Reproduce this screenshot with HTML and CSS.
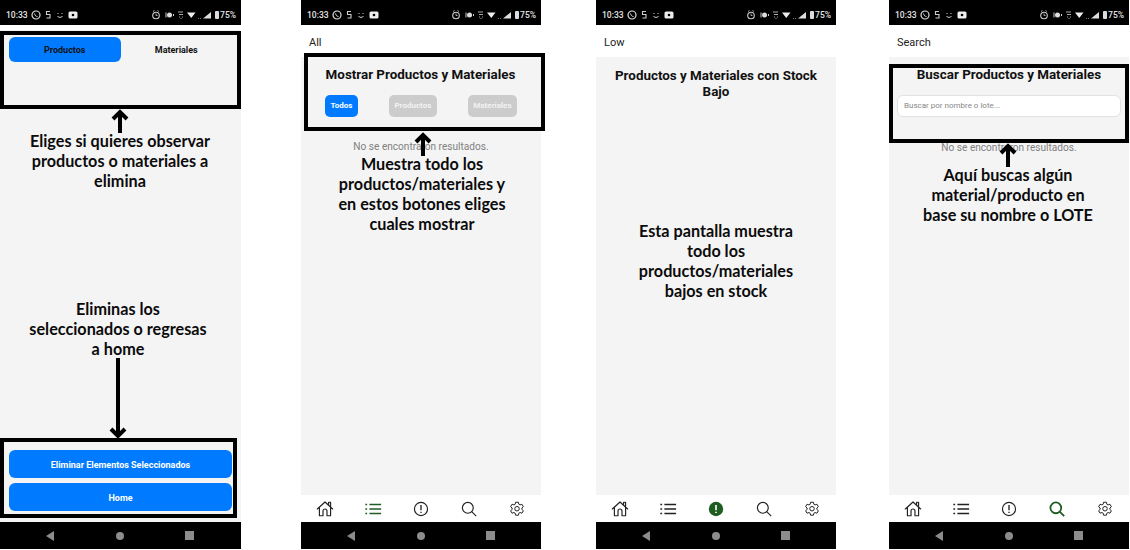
FILE: index.html
```html
<!DOCTYPE html>
<html lang="es">
<head>
<meta charset="UTF-8">
<title>Pantallas de inventario</title>
<link rel="stylesheet" href="styles.css">
</head>
<body>
<!--shared icons-->
<svg class="defs" width="0" height="0">
	<symbol id="i-home" viewBox="0 0 20 20"><path d="M1.5 10 10 2.2l8.5 7.800M3.800 8v9.500h4v-5.300a2.200 2.200 0 0 1 4.400 0v5.300h4V8M14 5V2.500h2.200v4.500" fill="none" stroke="currentColor" stroke-width="1.300" stroke-linejoin="round" stroke-linecap="round"/></symbol>
	<symbol id="i-list" viewBox="0 0 20 20"><path d="M6 5h13M6 10h13M6 15h13M1.5 5h2M1.5 10h2M1.5 15h2" fill="none" stroke="currentColor" stroke-width="1.5"/></symbol>
	<symbol id="i-alert" viewBox="0 0 20 20"><circle cx="10" cy="10" r="7.300" fill="none" stroke="currentColor" stroke-width="1.300"/><path d="M10 5.500v5.800M10 13v1.500" fill="none" stroke="currentColor" stroke-width="1.5"/></symbol>
	<symbol id="i-alert-on" viewBox="0 0 20 20"><circle cx="10" cy="10" r="8" fill="currentColor"/><path d="M10 5.500v5.800M10 13v1.500" fill="none" stroke="#fff" stroke-width="1.800"/></symbol>
	<symbol id="i-search" viewBox="0 0 20 20"><circle cx="8.700" cy="8.700" r="6" fill="none" stroke="currentColor" stroke-width="1.300"/><path d="m13 13 5 5" fill="none" stroke="currentColor" stroke-width="1.300"/></symbol>
	<symbol id="i-search-on" viewBox="0 0 20 20"><circle cx="8.700" cy="8.700" r="6" fill="none" stroke="currentColor" stroke-width="2"/><path d="m13 13 5 5" fill="none" stroke="currentColor" stroke-width="2"/></symbol>
	<symbol id="i-gear" viewBox="0 0 20 20"><path d="M8.400 2.500h3.200l.4 2.200 1.400.8 2.100-.8 1.600 2.800-1.700 1.400v1.600l1.700 1.400-1.600 2.800-2.100-.8-1.400.8-.4 2.200H8.400L8 14.700l-1.400-.8-2.100.8-1.600-2.800 1.700-1.400V8.900L2.900 7.500l1.600-2.800 2.100.8L8 4.700z" fill="none" stroke="currentColor" stroke-width="1.100" stroke-linejoin="round"/><circle cx="10" cy="9.700" r="2.500" fill="none" stroke="currentColor" stroke-width="1.100"/></symbol>
	<symbol id="i-status-left" viewBox="0 0 60 12"><circle cx="5" cy="6" r="4" fill="none" stroke="#ddd" stroke-width="1.200"/><path d="M3.500 4.500c.5 2 1.500 3 3 3" fill="none" stroke="#ddd"/><path d="M19 2.500h-3.500v3H19v3.500h-3.500" fill="none" stroke="#ccc" stroke-width="1.100"/><path d="M27 4v1M31 4v1M26.500 7.500q2.500 2 5 0" fill="none" stroke="#ccc"/><rect x="37.500" y="2.500" width="9" height="7" rx="1.500" fill="#eee"/><circle cx="42" cy="6" r="1.300" fill="#000"/></symbol>
	<symbol id="i-status-right" viewBox="0 0 60 12"><circle cx="4" cy="6.500" r="3.300" fill="none" stroke="#ccc" stroke-width="1.100"/><path d="M1 2.500 2.500 1.500M7 2.500 5.500 1.500M4 4.500v2h1.500" fill="none" stroke="#ccc" stroke-width=".8"/><circle cx="17.500" cy="6" r="2.500" fill="#ddd"/><path d="M14 3.500v5M21.500 5v2" stroke="#ccc" fill="none"/><path d="M26 3h5M27 5.500h4M27 8h1M30 8h1M28.500 9.500h1" stroke="#aaa" fill="none"/><path d="m35 3.500h8.500L39.250 9z" fill="#eee"/><path d="M46 9.500h1M48 9.500h1" stroke="#777" fill="none"/><path d="M51 9.500 59 3v6.500z" fill="#ddd"/></symbol>
</svg>

<div class="gallery">

	<div class="phone">
		<div class="status-bar">
			<span class="status-group"><span>10:33</span><svg class="status-icons"><use href="#i-status-left"/></svg></span>
			<span class="status-group"><svg class="status-icons"><use href="#i-status-right"/></svg><span class="battery"></span><span>75%</span></span>
		</div>
		<div class="screen screen-delete">
			<div class="delete-tabs">
				<div class="delete-tab delete-tab-on">Productos</div>
				<div class="delete-tab">Materiales</div>
			</div>
			<div class="delete-actions">
				<div class="wide-btn">Eliminar Elementos Seleccionados</div>
				<div class="wide-btn">Home</div>
			</div>
		</div>
		<div class="nav-bar"><i class="nav-back"></i><i class="nav-home"></i><i class="nav-recent"></i></div>
		<svg class="arrow arrow-d1" width="18" height="24" viewBox="0 0 18 24"><path d="M9 24V3M2 10l7-7 7 7"/></svg>
		<p class="note note-d1">Eliges si quieres observar<br>productos o materiales a<br>elimina</p>
		<p class="note note-d2">Eliminas los<br>seleccionados o regresas<br>a home</p>
		<svg class="arrow arrow-d2" width="18" height="81" viewBox="0 0 18 81"><path d="M9 0v78M2 71l7 7 7-7"/></svg>
	</div>

	<div class="phone phone-all">
		<div class="status-bar">
			<span class="status-group"><span>10:33</span><svg class="status-icons"><use href="#i-status-left"/></svg></span>
			<span class="status-group"><svg class="status-icons"><use href="#i-status-right"/></svg><span class="battery"></span><span>75%</span></span>
		</div>
		<div class="page-head">All</div>
		<div class="screen">
			<div class="framed">
				<h2 class="title title-all">Mostrar Productos y Materiales</h2>
				<div class="filters">
					<div class="filter filter-on">Todos</div>
					<div class="filter">Productos</div>
					<div class="filter">Materiales</div>
				</div>
			</div>
			<p class="empty">No se encontraron resultados.</p>
		</div>
		<div class="tab-bar">
			<svg class="tab"><use href="#i-home"/></svg>
			<svg class="tab tab-on"><use href="#i-list"/></svg>
			<svg class="tab"><use href="#i-alert"/></svg>
			<svg class="tab"><use href="#i-search"/></svg>
			<svg class="tab"><use href="#i-gear"/></svg>
		</div>
		<div class="nav-bar"><i class="nav-back"></i><i class="nav-home"></i><i class="nav-recent"></i></div>
		<svg class="arrow arrow-a" width="18" height="24" viewBox="0 0 18 24"><path d="M9 24V3M2 10l7-7 7 7"/></svg>
		<p class="note note-a">Muestra todo los<br>productos/materiales y<br>en estos botones eliges<br>cuales mostrar</p>
	</div>

	<div class="phone phone-low">
		<div class="status-bar">
			<span class="status-group"><span>10:33</span><svg class="status-icons"><use href="#i-status-left"/></svg></span>
			<span class="status-group"><svg class="status-icons"><use href="#i-status-right"/></svg><span class="battery"></span><span>75%</span></span>
		</div>
		<div class="page-head">Low</div>
		<div class="screen">
			<h2 class="title title-low">Productos y Materiales con Stock Bajo</h2>
		</div>
		<div class="tab-bar">
			<svg class="tab"><use href="#i-home"/></svg>
			<svg class="tab"><use href="#i-list"/></svg>
			<svg class="tab tab-on"><use href="#i-alert-on"/></svg>
			<svg class="tab"><use href="#i-search"/></svg>
			<svg class="tab"><use href="#i-gear"/></svg>
		</div>
		<div class="nav-bar"><i class="nav-back"></i><i class="nav-home"></i><i class="nav-recent"></i></div>
		<p class="note note-l">Esta pantalla muestra<br>todo los<br>productos/materiales<br>bajos en stock</p>
	</div>

	<div class="phone phone-search">
		<div class="status-bar">
			<span class="status-group"><span>10:33</span><svg class="status-icons"><use href="#i-status-left"/></svg></span>
			<span class="status-group"><svg class="status-icons"><use href="#i-status-right"/></svg><span class="battery"></span><span>75%</span></span>
		</div>
		<div class="page-head">Search</div>
		<div class="screen">
			<div class="framed framed-search">
				<h2 class="title title-search">Buscar Productos y Materiales</h2>
				<div class="search-box">Buscar por nombre o lote...</div>
			</div>
			<p class="empty empty-search">No se encontraron resultados.</p>
		</div>
		<div class="tab-bar">
			<svg class="tab"><use href="#i-home"/></svg>
			<svg class="tab"><use href="#i-list"/></svg>
			<svg class="tab"><use href="#i-alert"/></svg>
			<svg class="tab tab-on"><use href="#i-search-on"/></svg>
			<svg class="tab"><use href="#i-gear"/></svg>
		</div>
		<div class="nav-bar"><i class="nav-back"></i><i class="nav-home"></i><i class="nav-recent"></i></div>
		<svg class="arrow arrow-s" width="18" height="24" viewBox="0 0 18 24"><path d="M9 24V3M2 10l7-7 7 7"/></svg>
		<p class="note note-s">Aquí buscas algún<br>material/producto en<br>base su nombre o LOTE</p>
	</div>

</div>
</body>
</html>
```

FILE: styles.css
```css
html, body {
	margin: 0;
	padding: 0;
	background-color: #FFFFFF;
}
body {
	font-family: "Roboto", "Liberation Sans", sans-serif;
	color: #111111;
	overflow: hidden;
}
.defs {
	position: absolute;
}
.gallery {
	display: flex;
	align-items: flex-start;
}
.phone {
	position: relative;
	display: flex;
	flex-direction: column;
	width: 241px;
	height: 549px;
	flex: none;
}
.phone-all {
	margin-left: 60px;
	width: 240px;
}
.phone-low {
	margin-left: 55px;
	width: 240px;
}
.phone-search {
	margin-left: 53px;
	width: 240px;
}
.status-bar {
	display: flex;
	justify-content: space-between;
	align-items: center;
	height: 25px;
	padding: 5px 5px 0 6px;
	box-sizing: border-box;
	background: #000000;
	color: #E4E4E4;
	font-size: 8.5px;
	font-weight: 500;
}
.status-group {
	display: flex;
	align-items: center;
	gap: 3px;
}
.status-icons {
	width: 60px;
	height: 12px;
}
.battery {
	width: 4px;
	height: 8px;
	margin-right: -2px;
	background: #DDDDDD;
	border-radius: 1px;
}
.page-head {
	height: 32px;
	padding: 10px 0 0 8px;
	box-sizing: border-box;
	font-size: 11px;
	line-height: 16px;
	color: #222222;
}
.screen {
	flex: 1;
	display: flex;
	flex-direction: column;
	min-height: 0;
	background: #F4F4F4;
}
.screen-delete {
	border-top: 5px solid #FFFFFF;
}
.nav-bar {
	position: relative;
	height: 27px;
	background: #000000;
}
.nav-bar i {
	position: absolute;
	top: 9px;
}
.nav-back {
	left: 46px;
	width: 0;
	height: 0;
	border-top: 5px solid transparent;
	border-bottom: 5px solid transparent;
	border-right: 8px solid #8C8C8C;
}
.nav-home {
	left: 116px;
	width: 8px;
	height: 8px;
	margin-top: 1px;
	border-radius: 50%;
	background: #8C8C8C;
}
.nav-recent {
	left: 185px;
	width: 9px;
	height: 9px;
	background: #8C8C8C;
}
.tab-bar {
	display: flex;
	justify-content: space-around;
	align-items: center;
	height: 27px;
	background: #FFFFFF;
	color: #222222;
}
.tab {
	width: 18px;
	height: 18px;
}
.tab-on {
	color: #1F5C22;
}
/* delete screen */
.delete-tabs {
	display: flex;
	height: 78px;
	padding: 2px 5px 0;
	box-sizing: border-box;
	border: 4px solid #000000;
	margin-top: 1px;
}
.delete-tab {
	flex: 1;
	height: 25px;
	line-height: 27px;
	text-align: center;
	font-size: 9px;
	font-weight: 700;
	border-radius: 6px;
}
.delete-tab-on {
	background: #007BFF;
}
.delete-actions {
	display: flex;
	flex-direction: column;
	gap: 5px;
	margin-top: auto;
	margin-bottom: 4px;
	width: 237px;
	height: 80px;
	padding: 8px 1px 0 5px;
	box-sizing: border-box;
	border: 4px solid #000000;
}
.wide-btn {
	height: 28px;
	line-height: 30px;
	text-align: center;
	border-radius: 6px;
	background: #007BFF;
	color: #FFFFFF;
	font-size: 9px;
	font-weight: 700;
}
/* list and search screens */
.framed {
	width: 241px;
	height: 78px;
	margin: -4px 0 0 3px;
	padding-top: 10px;
	box-sizing: border-box;
	border: 4px solid #000000;
	position: relative;
}
.title {
	margin: 0;
	text-align: center;
	font-size: 13.4px;
	line-height: 16px;
	font-weight: 700;
	color: #111111;
}
.title-all {
	padding-right: 8px;
}
.title-low {
	padding: 11px 10px 0;
}
.title-search {
	margin-top: -11px;
}
.filters {
	display: flex;
	justify-content: space-between;
	padding: 0 24px 0 17px;
	margin-top: 12px;
}
.filter {
	height: 22px;
	line-height: 22px;
	padding: 0 5.5px;
	border-radius: 5px;
	background: #CCCCCC;
	color: #F2F2F2;
	font-size: 8px;
	font-weight: 700;
}
.filter-on {
	background: #007BFF;
	color: #FFFFFF;
}
.empty {
	margin: 9px 0 0;
	text-align: center;
	font-size: 10.1px;
	line-height: 14px;
	color: #808080;
}
.framed-search {
	width: 240px;
	height: 79px;
	margin: 7px 0 0;
}
.search-box {
	height: 22px;
	line-height: 20px;
	margin: 12px 4px 0;
	padding-left: 6px;
	box-sizing: border-box;
	background: #FFFFFF;
	border: 1px solid #E2E2E2;
	border-radius: 6px;
	font-size: 8px;
	color: #888888;
}
.empty-search {
	margin-top: -2px;
}
/* annotations laid over the screenshots */
.note {
	position: absolute;
	margin: 0;
	text-align: center;
	white-space: nowrap;
	font-family: "Lato", "Liberation Sans", sans-serif;
	font-size: 16.2px;
	line-height: 20px;
	font-weight: 700;
	color: #0B0B0B;
}
.note-d1 {
	left: 20px;
	top: 131px;
	width: 200px;
}
.note-d2 {
	left: 23px;
	top: 299px;
	width: 190px;
}
.note-a {
	left: 29px;
	top: 154px;
	width: 184px;
}
.note-l {
	left: 30px;
	top: 221px;
	width: 180px;
}
.note-s {
	left: 24px;
	top: 165px;
	width: 190px;
}
.arrow {
	position: absolute;
	fill: none;
	stroke: #000000;
	stroke-width: 4;
}
.arrow-d1 {
	left: 111px;
	top: 109px;
}
.arrow-d2 {
	left: 109px;
	top: 358px;
}
.arrow-a {
	left: 113px;
	top: 132px;
}
.arrow-s {
	left: 110px;
	top: 143px;
}
```
